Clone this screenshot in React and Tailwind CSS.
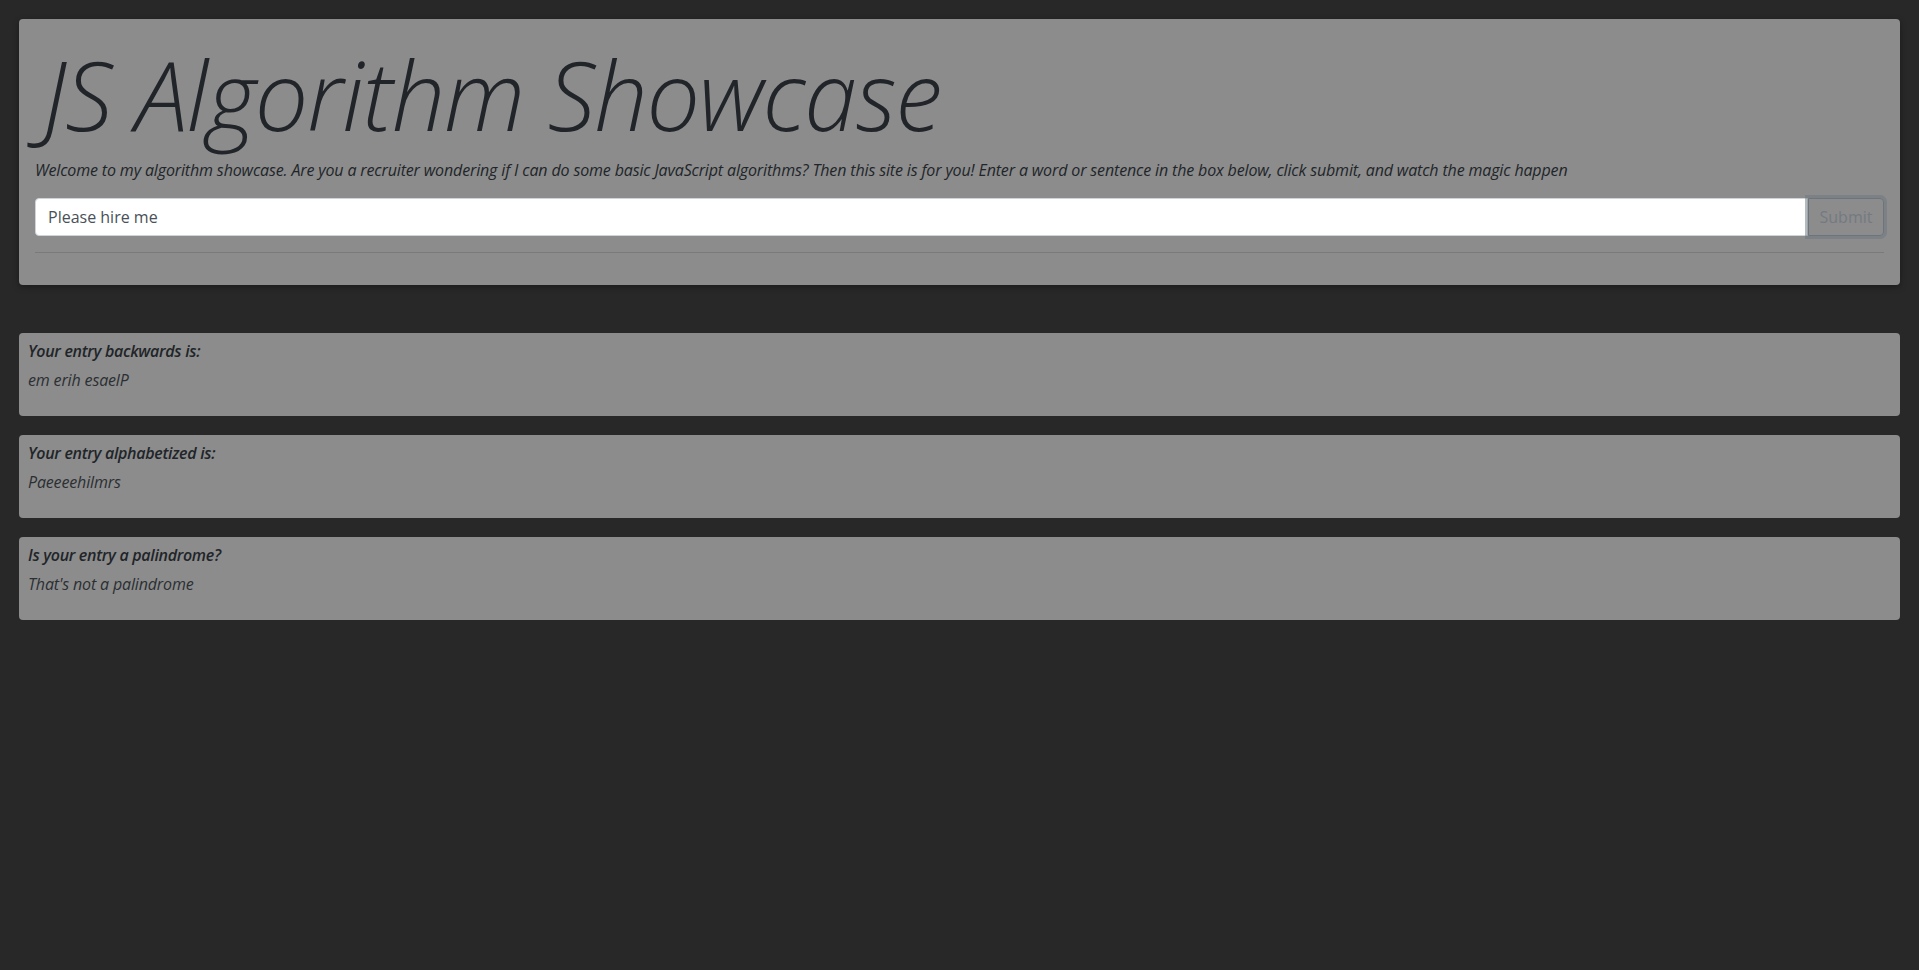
import React, {useState} from 'react';

const reverse = (s) => s.split('').reverse().join('');
const alphabetize = (s) => s.replace(/\s/g, '').split('').sort().join('');
const isPalindrome = (s) => {
  const clean = s.toLowerCase().replace(/[^a-z0-9]/g, '');
  return clean.length > 0 && clean === reverse(clean);
};

function ResultCard({label, value}){
  return (
    <div className="bg-[#8c8c8c] rounded-[4px] pl-[9px] pr-4 pt-[6px] pb-[24px] mb-[19px]">
      <div className="text-[16px] leading-[24px] font-semibold italic text-[#212529] tracking-[-0.3px]">{label}</div>
      <div className="text-[16px] leading-[24px] italic text-[#2b2f33] mt-[5px] tracking-[-0.15px]">{value}</div>
    </div>
  );
}

export default function App(){
  const [text, setText] = useState('Please hire me');
  const [entry, setEntry] = useState('Please hire me');

  const submit = (e) => {
    e.preventDefault();
    setEntry(text);
  };

  return (
    <div className="min-h-screen bg-[#282828] px-[19px] pt-[19px] font-['Open_Sans','Noto_Sans',sans-serif]">
      <div className="bg-[#8c8c8c] rounded-[4px] px-4 pt-[18px] pb-[32px] shadow-[0_2px_6px_rgba(0,0,0,0.35)]">
        <h1 className="pl-[8px] text-[95px] leading-[115px] font-light italic text-[#212529] tracking-[-1.1px] whitespace-nowrap">JS Algorithm Showcase</h1>
        <p className="mt-[6px] text-[16px] leading-[24px] italic text-[#212529] tracking-[-0.14px]">
          Welcome to my algorithm showcase. Are you a recruiter wondering if I can do some basic JavaScript algorithms? Then this site is for you! Enter a word or sentence in the box below, click submit, and watch the magic happen
        </p>
        <form onSubmit={submit} className="flex mt-4">
          <input
            value={text}
            onChange={e=>setText(e.target.value)}
            className="flex-1 h-[38px] bg-white border border-[#ced4da] rounded-l-[4px] px-3 text-[16px] text-[#495057] outline-none"
          />
          <button
            type="submit"
            className="h-[38px] w-[76px] border border-[#6c757d] rounded-r-[4px] text-[16px] text-[#737a81] shadow-[0_0_0_3px_rgba(108,117,125,0.5)]"
          >Submit</button>
        </form>
        <hr className="mt-4 border-t border-[#7a7a7a]" />
      </div>

      <div className="mt-[48px]">
        <ResultCard label="Your entry backwards is:" value={reverse(entry)} />
        <ResultCard label="Your entry alphabetized is:" value={alphabetize(entry)} />
        <ResultCard label="Is your entry a palindrome?" value={isPalindrome(entry) ? "That's a palindrome!" : "That's not a palindrome"} />
      </div>
    </div>
  );
}
